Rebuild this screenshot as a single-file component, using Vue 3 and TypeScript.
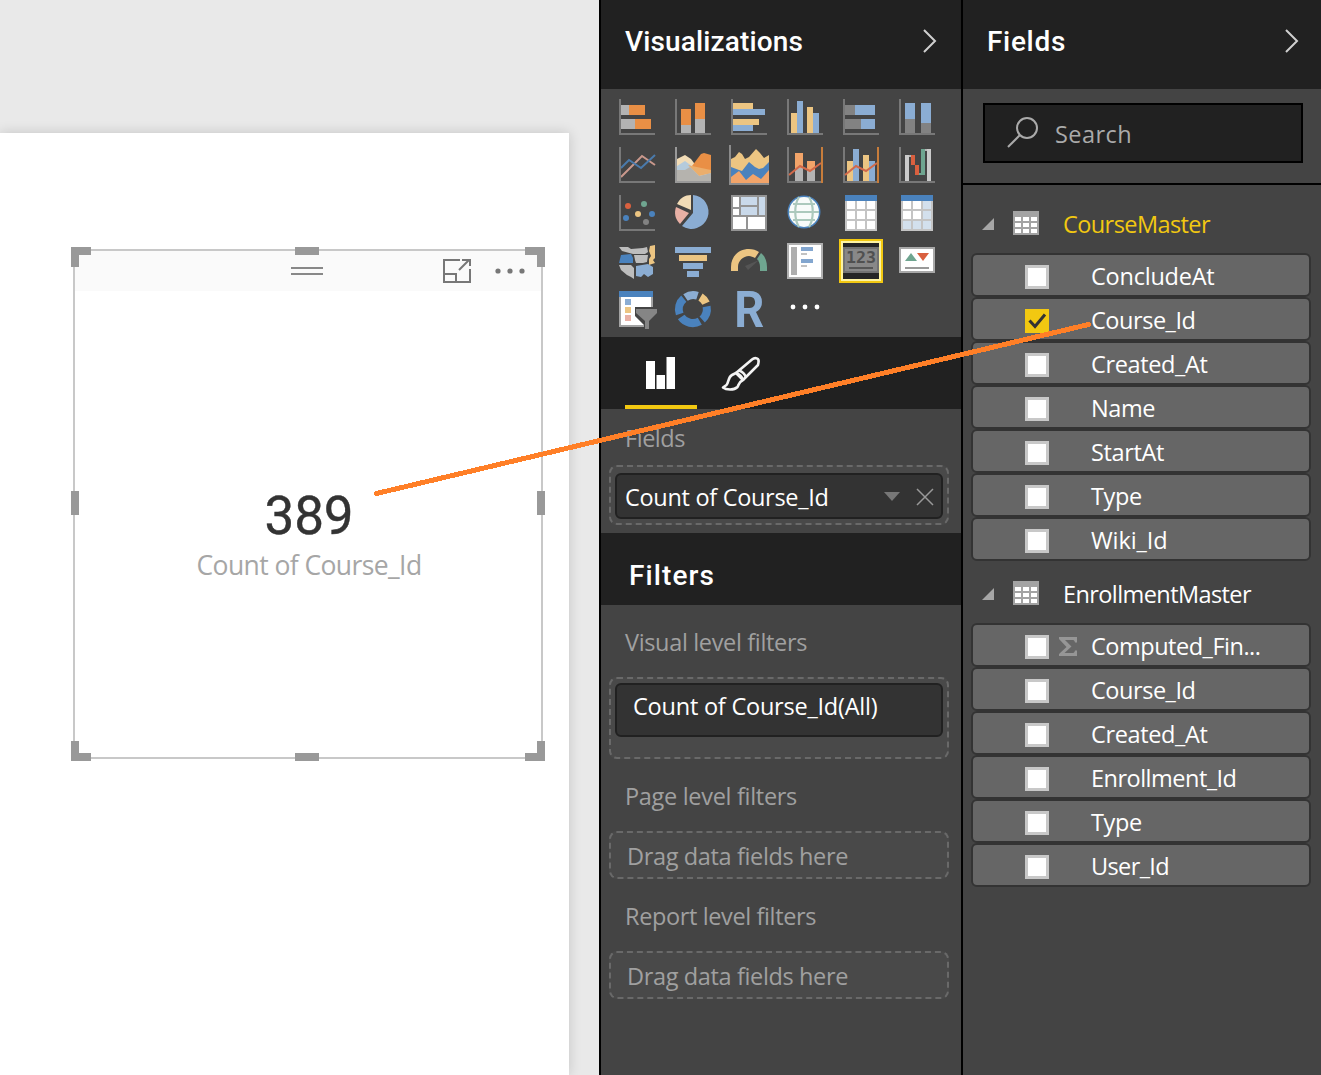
<script setup lang="ts">
interface Shape { d: string; f?: string; s?: string; w?: number }
interface Glyph { t: string; x: number; y: number; size: number; len: number; f: string; weight: number; family: string }
interface Visual { name: string; shapes: Shape[]; text?: Glyph }
interface Field { name: string; width: number; checked?: boolean; sum?: boolean }
interface Table { name: string; width: number; active?: boolean; fields: Field[] }

const orange = '#e98f45', grey = '#b3b3b3', dark = '#828282', yellow = '#ecc582', blue = '#8badd3'
const deep = '#4a82bd', pink = '#e8b0a5', red = '#d9603f', green = '#6fa590', pale = '#c9d9ea'
const cream = '#f2dcb6', line = '#787878', white = '#ffffff', apricot = '#f2a469'

const r = (x: number, y: number, w: number, h: number, f: string): Shape => ({ d: `M${x} ${y}h${w}v${h}h${-w}z`, f })
const p = (d: string, f: string): Shape => ({ d, f })
const l = (d: string, s: string, w = 2): Shape => ({ d, s, w })
const dot = (x: number, y: number, q: number, f: string): Shape => ({ d: `M${x - q} ${y}a${q} ${q} 0 1 1 ${2 * q} 0a${q} ${q} 0 1 1 ${-2 * q} 0z`, f })
const axis = l('M1 0V35H36', line)

function grid(shade: boolean): Shape[] {
  const out = [r(2, 0, 32, 36, '#c4c4c4'), r(2, 0, 32, 6, deep)]
  for (let row = 0; row < 3; row++)
    for (let col = 0; col < 3; col++)
      out.push(r(4 + col * 10, 6 + row * 10, 8, 8, shade && (row === 2 || col === 2) ? '#d3e0ed' : white))
  return out
}

const visuals: Visual[] = [
  { name: 'Stacked bar', shapes: [r(2, 6, 8, 10, grey), r(10, 6, 16, 10, orange), r(2, 20, 14, 10, grey), r(16, 20, 16, 10, orange), axis] },
  { name: 'Stacked column', shapes: [r(6, 10, 10, 16, orange), r(6, 26, 10, 8, grey), r(20, 4, 10, 16, orange), r(20, 20, 10, 14, grey), axis] },
  { name: 'Clustered bar', shapes: [r(2, 4, 20, 6, yellow), r(2, 10, 32, 6, blue), r(2, 20, 26, 6, yellow), r(2, 26, 20, 6, blue), axis] },
  { name: 'Clustered column', shapes: [r(4, 14, 6, 20, yellow), r(10, 2, 6, 32, blue), r(20, 8, 6, 26, yellow), r(26, 14, 6, 20, blue), axis] },
  { name: 'Full bar', shapes: [r(2, 6, 10, 10, dark), r(12, 6, 20, 10, blue), r(2, 20, 16, 10, dark), r(18, 20, 14, 10, blue), axis] },
  { name: 'Full column', shapes: [r(6, 4, 10, 16, blue), r(6, 20, 10, 14, dark), r(22, 4, 10, 20, blue), r(22, 24, 10, 10, dark), axis] },

  { name: 'Line', shapes: [l('M2 30 23 9 36 18', '#c9988c'), l('M2 21 10 13 22 21 36 8', '#4a7aab'), axis] },
  { name: 'Area', shapes: [
    p('M2 12 10 8 16 12 22 20 36 23V34H2z', cream), p('M2 19 10 14 18 20 24 28V34H2z', '#b5cbdc'),
    p('M17 19 26 7 29 6 36 8V26L24 28z', orange), p('M13 18 17 19 36 23V26L24 29z', '#ebae6c'),
    p('M2 23 10 23 15 20 24 29 36 26V34H2z', '#b5b3ae'), l('M1 0V35H36', '#999999')] },
  { name: 'Stacked area', shapes: [
    l('M-1 -2V37H38', '#8b8b8b'), p('M0 12 4 10 8 5 11 7 14 12 18 10 25 2 29 6 33 11 38 8V35H0z', yellow),
    p('M0 20 8 23 11 24 18 15 24 20 28 22 32 21 38 15V35H0z', deep), p('M0 30 8 24 15 33 22 27 30 32 38 23V36H0z', apricot)] },
  { name: 'Line and stacked column', shapes: [r(8, 6, 8, 15, apricot), r(8, 21, 8, 13, grey), r(20, 14, 8, 9, apricot), r(20, 23, 8, 11, grey), axis, l('M2 28 13 19 23 24 34 16', '#d2694a'), r(34, 0, 2, 36, '#c87d3b')] },
  { name: 'Line and clustered column', shapes: [r(4, 14, 6, 20, yellow), r(10, 2, 6, 32, blue), r(20, 8, 6, 26, yellow), r(26, 14, 6, 20, blue), axis, l('M2 28 13 19 23 24 34 16', '#d2694a'), r(34, 0, 2, 36, '#c87d3b')] },
  { name: 'Waterfall', shapes: [r(6, 8, 6, 2, '#b5b5b5'), r(6, 8, 4, 26, '#cacaca'), r(12, 8, 4, 10, red), r(16, 18, 4, 10, red), r(20, 26, 2, 2, green), r(22, 2, 4, 26, green), r(26, 2, 4, 2, '#b5b5b5'), r(28, 2, 4, 32, '#cacaca'), axis] },

  { name: 'Scatter', shapes: [dot(9, 11, 3, red), dot(25, 9, 3, green), dot(19, 19, 3, yellow), dot(33, 19, 3, deep), dot(7, 23, 3, deep), dot(27, 27, 3, dark), axis] },
  { name: 'Pie', shapes: [p('M18 0A17 17 0 1 1 7 31L18 18z', blue), p('M16 0V15L2 9C5 3 10 0 16 0z', cream), p('M1 12 14 18 5 29C0 24 -1 18 1 12z', pink)] },
  { name: 'Treemap', shapes: [r(0, 0, 36, 36, '#949494'), r(2, 2, 6, 10, white), r(2, 14, 6, 6, white), r(10, 2, 16, 8, pale), r(10, 12, 16, 8, pale), r(28, 2, 6, 18, pale), r(2, 22, 13, 12, white), r(17, 22, 17, 12, white)] },
  { name: 'Map', shapes: [dot(17, 17, 16.5, deep), dot(17, 17, 15, '#f8fbfa'), l('M2 17H32M6 9H28M6 25H28M12 2C7 10 7 24 12 32M22 2C27 10 27 24 22 32', '#acc9bd', 2.2)] },
  { name: 'Table', shapes: grid(false) },
  { name: 'Matrix', shapes: grid(true) },

  { name: 'Filled map', shapes: [
    p('M0 4 9 4 12 6 24 5 28 4 29 9 26 11H14L3 8z', '#bdbdbd'), p('M2 12 12 11 14 15 14 20H0z', deep), p('M15 12H29L28 19 24 20 17 20 16 17z', '#bdbdbd'),
    p('M31 3 36 2V15L34 17 36 20 30 22 30 16 32 13 30 8z', yellow), p('M0 22H12L15 25V36L12 34 8 32 2 27z', '#bdbdbd'),
    p('M17 23 29 21 34 24V31L29 34 25 31 22 34 17 33z', blue)] },
  { name: 'Funnel', shapes: [r(0, 4, 36, 6, blue), r(4, 12, 28, 6, yellow), r(8, 20, 20, 6, blue), r(12, 28, 12, 6, blue)] },
  { name: 'Gauge', shapes: [p('M0 28V24C0 13 8 6 18 6 22 6 25 7 28 9L24 15C22 14 20 13 18 13 12 13 7 18 7 24V28z', yellow), p('M30 10C34 13 36 18 36 24V28H29V24C29 21 28 18 26 16z', green), p('M14 23 28 17 17 27z', '#555555')] },
  { name: 'Multi-row card', shapes: [r(0, 0, 36, 36, '#b0b0b0'), r(2, 2, 32, 32, white), r(4, 4, 6, 28, '#aeaeae'), r(14, 4, 12, 4, '#83a6cf'), r(14, 10, 6, 2, '#c2c2c2'), r(14, 16, 12, 4, '#83a6cf'), r(14, 22, 6, 2, '#c2c2c2')] },
  { name: 'Card', shapes: [r(-4, -4, 44, 44, '#f2c811'), r(-2, -2, 40, 40, '#fdf3a3'), r(0, 0, 36, 36, '#252525'), r(0, 4, 36, 26, '#727272'), r(2, 6, 32, 22, '#888888'), r(6, 24, 24, 2, '#565656')],
    text: { t: '123', x: 3, y: 20, size: 16, len: 30, f: '#505050', weight: 700, family: 'DejaVu Sans Mono' } },
  { name: 'KPI', shapes: [r(0, 4, 36, 26, '#a8a8a8'), r(2, 6, 32, 22, white), p('M6 18 12 10 18 18z', green), p('M18 10H30L24 18z', red), r(6, 24, 24, 2, '#999999')] },

  { name: 'Slicer', shapes: [r(0, 0, 34, 36, '#a3a3a3'), r(2, 6, 30, 28, white), r(0, 0, 34, 6, deep), r(6, 8, 6, 6, blue), r(6, 16, 6, 6, yellow), r(6, 24, 6, 6, pink), p('M16 16H38V38H25V34L16 25z', '#444444'), p('M17 18H38V22L30 30V38H26V30L17 22z', '#858585')] },
  { name: 'Donut', shapes: [
    l('M10.5 6.5A14 14 0 0 1 22.5 4.8', blue, 8), l('M25.5 6A14 14 0 0 1 31 12.2', yellow, 8), l('M31.6 15.5A14 14 0 0 1 27.2 28.5', deep, 8),
    l('M24.8 30.2A14 14 0 0 1 6.2 26', deep, 8), l('M4.7 23A14 14 0 0 1 8.8 7.6', deep, 8)] },
  { name: 'R script', shapes: [], text: { t: 'R', x: 3.2, y: 36, size: 50, len: 30, f: blue, weight: 700, family: 'Roboto' } },
  { name: 'More', shapes: [dot(6, 16, 2.4, white), dot(18, 16, 2.4, white), dot(30, 16, 2.4, white)] },
]

const tables: Table[] = [
  { name: 'CourseMaster', width: 147, active: true, fields: [
    { name: 'ConcludeAt', width: 123.5 }, { name: 'Course_Id', width: 104.5, checked: true }, { name: 'Created_At', width: 116.5 },
    { name: 'Name', width: 64 }, { name: 'StartAt', width: 73 }, { name: 'Type', width: 51 }, { name: 'Wiki_Id', width: 76.5 }] },
  { name: 'EnrollmentMaster', width: 188, fields: [
    { name: 'Computed_Fin...', width: 169.5, sum: true }, { name: 'Course_Id', width: 104.5 }, { name: 'Created_At', width: 116.5 },
    { name: 'Enrollment_Id', width: 145.5 }, { name: 'Type', width: 51 }, { name: 'User_Id', width: 78 }] },
]

// Tracks a label so that it fills the given width in pixels.
const vFit = {
  mounted(el: HTMLElement, binding: { value: number }) {
    const count = (el.textContent ?? '').length
    const natural = el.getBoundingClientRect().width
    el.style.letterSpacing = `${((binding.value - natural) / count).toFixed(3)}px`
  },
}
</script>

<template>
  <div class="app">
    <main class="canvas">
      <div class="page">
        <section class="visual">
          <header class="visual-bar">
            <span class="grip"></span>
            <svg class="focus" width="30" height="26" viewBox="0 0 30 26" fill="none" stroke="#777" stroke-width="2">
              <path d="M18 2H2V24H28V11M2 16H14V24M17 12 27 2M20 2H28V8" />
            </svg>
            <svg width="30" height="6" viewBox="0 0 30 6" fill="#777"><circle cx="3" cy="3" r="2.6" /><circle cx="15" cy="3" r="2.6" /><circle cx="27" cy="3" r="2.6" /></svg>
          </header>
          <div class="card">
            <div class="value"><span v-fit="89">389</span></div>
            <div class="caption"><span v-fit="225">Count of Course_Id</span></div>
          </div>
          <i v-for="h in ['tl', 'tr', 'bl', 'br', 'tm', 'bm', 'lm', 'rm']" :key="h" class="handle" :class="h"></i>
        </section>
      </div>
    </main>

    <aside class="pane viz">
      <header class="head"><h2><span v-fit="178">Visualizations</span></h2>
        <svg width="16" height="26" viewBox="0 0 16 26" fill="none" stroke="#d0d0d0" stroke-width="2"><path d="M2 2 13 13 2 24" /></svg>
      </header>
      <div class="gallery">
        <svg v-for="v in visuals" :key="v.name" class="icon" viewBox="0 0 36 36" width="36" height="36">
          <path v-for="(s, i) in v.shapes" :key="i" :d="s.d" :fill="s.f ?? 'none'" :stroke="s.s ?? 'none'" :stroke-width="s.w ?? 0" />
          <text v-if="v.text" :x="v.text.x" :y="v.text.y" :font-size="v.text.size" :font-weight="v.text.weight" :font-family="v.text.family" :fill="v.text.f" :textLength="v.text.len" lengthAdjust="spacingAndGlyphs">{{ v.text.t }}</text>
        </svg>
      </div>
      <nav class="tabs">
        <div class="tab on">
          <svg width="32" height="34" viewBox="0 0 32 34" fill="#fff"><path d="M1 5h9v28H1zM11.500 19h8.500v14h-8.500zM21.500 1h8.500v32h-8.500z" /></svg>
        </div>
        <div class="tab">
          <svg width="40" height="36" viewBox="0 0 40 36" fill="none" stroke="#f4f4f4" stroke-width="2.6" stroke-linejoin="round">
            <path d="M15 17 31 3.500C34 1 38.500 2 37.500 6.500L37 9 22 24" />
            <path d="M15 17 11 19C7 21 8 26 5.500 29L2 31.500C5 34 13 34.500 16.500 31 18 29 17 26.500 22 24zM15 17C18 18 21 21 22 24M18 14.500C21 15.500 24 18.500 25 21.500" />
          </svg>
        </div>
      </nav>
      <div class="label fields-label"><span v-fit="60">Fields</span></div>
      <div class="well field-well">
        <div class="chip"><span v-fit="203.5">Count of Course_Id</span>
          <svg class="caret" width="16" height="9" viewBox="0 0 16 9"><path d="M0 0H16L8 9z" fill="#777" /></svg>
          <svg width="18" height="18" viewBox="0 0 18 18"><path d="M1 1 17 17M17 1 1 17" stroke="#999" stroke-width="1.500" /></svg>
        </div>
      </div>
      <header class="filters"><h2><span v-fit="86">Filters</span></h2></header>
      <div class="label visual-label"><span v-fit="182">Visual level filters</span></div>
      <div class="well filter-well"><div class="chip tall"><span v-fit="244.5">Count of Course_Id(All)</span></div></div>
      <div class="label"><span v-fit="172">Page level filters</span></div>
      <div class="well drop"><span v-fit="221">Drag data fields here</span></div>
      <div class="label"><span v-fit="191">Report level filters</span></div>
      <div class="well drop"><span v-fit="221">Drag data fields here</span></div>
    </aside>

    <aside class="pane fields">
      <header class="head"><h2><span v-fit="79">Fields</span></h2>
        <svg width="16" height="26" viewBox="0 0 16 26" fill="none" stroke="#d0d0d0" stroke-width="2"><path d="M2 2 13 13 2 24" /></svg>
      </header>
      <div class="search-row">
        <div class="search">
          <svg width="32" height="32" viewBox="0 0 32 32" fill="none" stroke="#aaa" stroke-width="2"><circle cx="20" cy="12" r="10" /><path d="M13 19 1 31" /></svg>
          <span v-fit="77">Search</span>
        </div>
      </div>
      <section v-for="t in tables" :key="t.name">
        <header class="table-head" :class="{ active: t.active }">
          <svg class="twist" width="12" height="12" viewBox="0 0 12 12"><path d="M12 0V12H0z" fill="#a6a6a6" /></svg>
          <svg class="sheet" width="26" height="24" viewBox="0 0 26 24"><path d="M0 0H26V24H0z" fill="#a3a3a3" /><path d="M2 6h6v4H2zM10 6h6v4h-6zM18 6h6v4h-6zM2 12h6v4H2zM10 12h6v4h-6zM18 12h6v4h-6zM2 18h6v4H2zM10 18h6v4h-6zM18 18h6v4h-6z" fill="#fff" /></svg>
          <span v-fit="t.width">{{ t.name }}</span>
        </header>
        <div v-for="f in t.fields" :key="f.name" class="field">
          <span class="box" :class="{ checked: f.checked }">
            <svg v-if="f.checked" width="24" height="24" viewBox="0 0 24 24" fill="none" stroke="#333" stroke-width="3"><path d="M4.500 11.500 10 17.500 20 5.500" /></svg>
          </span>
          <span class="sum"><svg v-if="f.sum" width="18" height="19" viewBox="0 0 18 19" fill="#969696"><path d="M0 0H18V5.500H16C15.500 3.500 15 3 13 3H6L12.500 9.500 5.500 16H13C15 16 15.500 15.500 16 13.500H18V19H0V17L7.500 10 0 2z" /></svg></span>
          <span class="name"><span v-fit="f.width">{{ f.name }}</span></span>
        </div>
      </section>
    </aside>

    <svg class="pointer" width="1321" height="1075" viewBox="0 0 1321 1075">
      <path d="M376.500 493.500 1088.500 324.500" stroke="#ff7f27" stroke-width="5" stroke-linecap="round" shape-rendering="crispEdges" />
    </svg>
  </div>
</template>

<style>
body { margin: 0; overflow: hidden; }
</style>

<style scoped>
.app { position: relative; display: flex; width: 1321px; height: 1075px; overflow: hidden; font: 23.5px/32px "Open Sans", "Noto Sans", sans-serif; color: #fff; white-space: nowrap; box-sizing: border-box; }
.app * { box-sizing: border-box; }
svg { display: block; overflow: visible; flex: none; }
span { display: inline-block; }
h2 { margin: 0; font: 500 28px/36px Roboto, sans-serif; }
.canvas { width: 599px; height: 1075px; padding-top: 133px; background: #e9e9e9; overflow: hidden; }
.page { width: 569px; height: 942px; padding: 116px 0 0 73px; background: #fff; box-shadow: 0 0 12px rgba(0, 0, 0, .16); }
.visual { position: relative; width: 470px; height: 510px; border: 2px solid #c8c8c8; }
.visual-bar { display: flex; align-items: center; height: 40px; padding: 0 16px 0 216px; background: #fafafa; }
.grip { width: 32px; height: 8px; border: solid #888; border-width: 2px 0; }
.focus { margin: 0 23px 0 auto; }
.card { display: flex; flex-direction: column; align-items: center; padding: 193px 0 0 2px; }
.value { height: 63px; font: 53px/64px Roboto, sans-serif; color: #333; -webkit-text-stroke: .4px #333; }
.caption { height: 36px; font-size: 26.5px; line-height: 36px; color: #a6a6a6; }
.handle { position: absolute; width: 20px; height: 20px; border: 0 solid #999; }
.tl { top: -4px; left: -4px; border-width: 8px 0 0 8px; }
.tr { top: -4px; right: -4px; border-width: 8px 8px 0 0; }
.bl { bottom: -4px; left: -4px; border-width: 0 0 8px 8px; }
.br { bottom: -4px; right: -4px; border-width: 0 8px 8px 0; }
.tm, .bm { left: 220px; width: 24px; height: 8px; background: #999; }
.tm { top: -4px; }
.bm { bottom: -4px; }
.lm, .rm { top: 240px; width: 8px; height: 24px; background: #999; }
.lm { left: -4px; }
.rm { right: -4px; }
.pane { height: 1075px; border-left: 2px solid #000; background: #444; }
.viz { width: 362px; }
.fields { width: 360px; }
.head { display: flex; justify-content: space-between; height: 89px; padding: 24px 23px 0 24px; background: #212121; }
.fields .head { padding-right: 21px; }
.head svg { margin-top: 4px; }
.gallery { display: grid; grid-template-columns: repeat(6, 36px); grid-auto-rows: 36px; gap: 12px 20px; height: 248px; padding: 10px 0 0 18px; }
.tabs { display: flex; gap: 8px; height: 72px; padding-left: 24px; background: #212121; }
.tab { display: flex; justify-content: center; width: 72px; padding-top: 19px; }
.tab.on { border-bottom: 4px solid #f2c811; }
.label { height: 32px; margin: 21px 0 19px 24px; color: #a0a0a0; }
.fields-label { margin: 13px 0 11px 24px; }
.well { width: 340px; margin-left: 8px; padding: 4px; border: 2px dashed #696969; border-radius: 8px; background: #494949; }
.field-well { height: 60px; padding-top: 6px; }
.chip { display: flex; align-items: center; width: 328px; height: 46px; padding: 1px 7px 0 8px; border: 2px solid #212121; border-radius: 6px; background: #333; }
.caret { margin: 0 16px 0 auto; }
.filters { height: 72px; margin-top: 8px; padding: 25px 0 0 28px; background: #212121; }
.filter-well { height: 82px; }
.chip.tall { height: 54px; padding: 0 0 8px 16px; }
.drop { height: 48px; padding: 7px 0 0 16px; color: #a0a0a0; }
.search-row { height: 96px; padding: 14px 0 0 20px; border-bottom: 2px solid #000; }
.search { display: flex; align-items: center; gap: 16px; width: 320px; height: 60px; padding: 2px 0 0 22px; border: 2px solid #000; background: #212121; color: #aaa; }
.search svg { margin-top: -5px; }
.table-head { display: flex; align-items: center; height: 62px; padding: 3px 0 0 19px; }
.table-head.active { height: 68px; padding-top: 9px; color: #f2c811; }
.twist { margin-right: 19px; }
.sheet { margin: -2px 24px 0 0; }
.field { display: flex; align-items: center; width: 340px; height: 44px; margin-left: 8px; padding: 3px 0 0 52px; border: 2px solid #333; border-radius: 6px; background: #666; }
.box { width: 24px; height: 24px; border: 3px solid #c8c8c8; background: #fff; }
.box.checked { border: 0; background: #f2c811; }
.sum { width: 42px; height: 19px; padding-left: 10px; }
.name { margin-top: -2px; }
.pointer { position: absolute; top: 0; left: 0; pointer-events: none; }
</style>
